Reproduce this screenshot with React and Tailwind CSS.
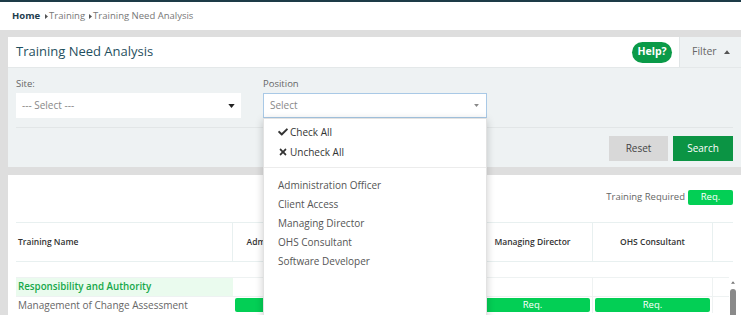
import React from 'react'
import { FaCheck, FaTimes } from 'react-icons/fa'

const POSITIONS = [
  'Administration Officer',
  'Client Access',
  'Managing Director',
  'OHS Consultant',
  'Software Developer',
]

// the last column (Software Developer) is scrolled out of view in the table
const COLUMNS = [
  'Administration Officer',
  'Client Access',
  'Managing Director',
  'OHS Consultant',
]

const Caret = ({ dir = 'down', className = '' }) => {
  const pts = {
    down: '0,0 8,0 4,5',
    up: '0,5 8,5 4,0',
    right: '0,0 5,4 0,8',
  }[dir]
  const box = dir === 'right' ? '0 0 5 8' : '0 0 8 5'
  return (
    <svg viewBox={box} className={className} fill="currentColor">
      <polygon points={pts} />
    </svg>
  )
}

const Breadcrumb = () => (
  <div className="bg-white h-[28px] flex items-center pl-3 text-[9.5px] text-[#777]">
    <span className="font-bold text-[#1d3d4d]">Home</span>
    <Caret dir="right" className="w-[3px] h-[5px] ml-[5px] mr-[1px] text-[#555]" />
    <span>Training</span>
    <Caret dir="right" className="w-[3px] h-[5px] ml-[4px] mr-[1px] text-[#555]" />
    <span>Training Need Analysis</span>
  </div>
)

const PositionDropdown = () => (
  <div className="absolute left-0 top-full w-full h-[220px] bg-white shadow-[0_2px_8px_rgba(0,0,0,0.2)] border border-[#e2e2e2] z-10 pt-[3px] text-[10px] text-[#555]">
    <div className="h-[20px] flex items-center pl-[14px] gap-[2px] text-[#333]">
      <FaCheck className="w-[10px] h-[10px]" />
      <span>Check All</span>
    </div>
    <div className="h-[20px] flex items-center pl-[14px] gap-[2px] text-[#333]">
      <FaTimes className="w-[10px] h-[10px]" />
      <span>Uncheck All</span>
    </div>
    <div className="mt-[5px] h-px bg-[#ececec]" />
    <div className="pt-[8px]">
      {POSITIONS.map(p => (
        <div key={p} className="h-[19px] flex items-center pl-[14px]">{p}</div>
      ))}
    </div>
  </div>
)

const FilterPanel = () => (
  <div className="bg-white">
    <div className="h-[31px] flex items-center border-b border-[#e4e8e9]">
      <div className="pl-2 flex-1 text-[13px] text-[#1f4f60]">Training Need Analysis</div>
      <div className="h-[21px] w-[40px] rounded-full bg-[#0a9a48] text-white text-[10.5px] font-bold flex items-center justify-center mr-[7px]">
        Help?
      </div>
      <div className="h-full w-[62px] bg-[#eef2f3] border-l border-[#e0e5e6] flex items-center pl-[12px] gap-[7px] text-[10.5px] text-[#666]">
        Filter
        <Caret dir="up" className="w-[6px] h-[4px] text-[#555]" />
      </div>
    </div>
    <div className="bg-[#eef2f3] h-[99px] px-2 pt-[9px]">
      <div className="flex gap-[22px]">
        <div className="w-[225px]">
          <div className="h-[14px] leading-[14px] text-[9.5px] text-[#666] mb-[2px]">Site:</div>
          <div className="h-[25px] bg-white flex items-center justify-between pl-[6px] pr-[6px] text-[10px] text-[#888]">
            <span>--- Select ---</span>
            <Caret className="w-[7px] h-[4px] text-[#222]" />
          </div>
        </div>
        <div className="w-[224px]">
          <div className="h-[14px] leading-[14px] text-[9.5px] text-[#666] mb-[2px]">Position</div>
          <div className="relative">
            <div className="h-[25px] bg-white border border-[#a9c9e6] flex items-center justify-between pl-[6px] pr-[7px] text-[10px] text-[#888]">
              <span>Select</span>
              <Caret className="w-[5px] h-[3px] text-[#888]" />
            </div>
            <PositionDropdown />
          </div>
        </div>
      </div>
      <div className="mt-[9px] h-px bg-[#e2e6e7]" />
      <div className="mt-[8px] flex justify-end gap-[5px]">
        <div className="w-[59px] h-[25px] bg-[#d8d8d8] text-[#444] text-[10px] flex items-center justify-center">Reset</div>
        <div className="w-[60px] h-[25px] bg-[#0b9444] text-white text-[10px] flex items-center justify-center">Search</div>
      </div>
    </div>
  </div>
)

const ReqBar = () => (
  <div className="h-[14px] mx-[2px] rounded-[2px] bg-[#03cf55] text-white text-[9.5px] flex items-center justify-center">
    Req.
  </div>
)

const ResultsPanel = () => (
  <div className="bg-white h-[140px] px-2 pt-[15px] overflow-hidden">
    <div className="h-[15px] flex items-center justify-end gap-[3px]">
      <span className="text-[9.5px] text-[#666]">Training Required</span>
      <div className="w-[45px] h-[15px] rounded-[2px] bg-[#03cf55] text-white text-[9.5px] flex items-center justify-center">Req.</div>
    </div>
    <div className="mt-[17px] flex h-[40px] border-t border-b border-[#e8f0f0] text-[8.5px] font-semibold text-[#333]">
      <div className="w-[217px] border-r border-[#e8f0f0] flex items-center pl-[2px]">Training Name</div>
      {COLUMNS.map(c => (
        <div key={c} className="w-[120px] border-r border-[#e8f0f0] flex items-center justify-center">{c}</div>
      ))}
      <div className="flex-1" />
    </div>
    <div className="mt-[15px] flex -mr-1">
      <div className="flex-1 border-t border-[#eef2f2]">
        <div className="flex h-[18px]">
          <div className="w-[217px] bg-[#eafbee] flex items-center pl-[2px] text-[9.75px] font-semibold text-[#17a84a]">
            Responsibility and Authority
          </div>
          {COLUMNS.map(c => (
            <div key={c} className="w-[120px] border-r border-[#eef2f2]" />
          ))}
        </div>
        <div className="flex h-[17px] border-t border-[#eef2f2]">
          <div className="w-[217px] flex items-center pl-[2px] text-[10px] text-[#666]">
            Management of Change Assessment
          </div>
          {COLUMNS.map(c => (
            <div key={c} className="w-[120px] pt-[1px] border-r border-[#eef2f2]"><ReqBar /></div>
          ))}
        </div>
      </div>
      <div className="w-[8px] flex flex-col items-center">
        <Caret dir="up" className="w-[4px] h-[3px] mt-[4px] text-[#777]" />
        <div className="mt-[5px] w-[6px] h-[30px] rounded-full bg-[#8a8a8a]" />
      </div>
    </div>
  </div>
)

export default function App() {
  return (
    <div className="w-[741px] h-[315px] overflow-hidden bg-[#dedede] font-['Open_Sans',sans-serif]">
      <div className="h-[2px] bg-[#1d3b47]" />
      <Breadcrumb />
      <div className="pl-2 pt-[7px]">
        <FilterPanel />
        <div className="h-[8px]" />
        <ResultsPanel />
      </div>
    </div>
  )
}
